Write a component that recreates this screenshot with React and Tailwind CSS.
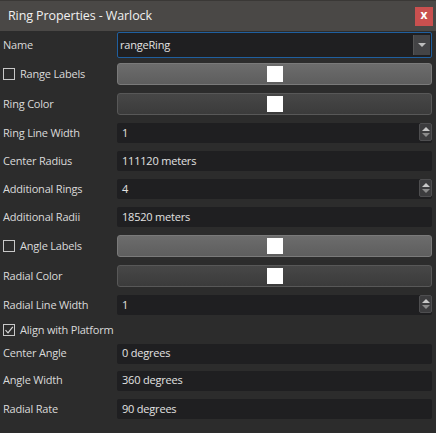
import React from "react";

const font = { fontFamily: '"Open Sans", "Noto Sans", sans-serif' };

function Label({ children }) {
  return (
    <div className="w-[117px] shrink-0 pl-[3px] text-[11px] tracking-[-0.2px] whitespace-nowrap text-[#dadada]">
      {children}
    </div>
  );
}

function CheckLabel({ checked, children }) {
  return (
    <div className="w-[117px] shrink-0 pl-[3px] flex items-center gap-[5px] text-[11px] tracking-[-0.2px] whitespace-nowrap text-[#dadada]">
      <div className="w-[12px] h-[12px] shrink-0 border border-[#c8c8c8] flex items-center justify-center">
        {checked && (
          <svg width="10" height="10" viewBox="0 0 10 10">
            <path d="M1.5 5.2 L4 7.8 L8.8 1.8" fill="none" stroke="#d8d8d8" strokeWidth="1.2" />
          </svg>
        )}
      </div>
      <span>{children}</span>
    </div>
  );
}

function TextField({ value, spin }) {
  return (
    <div className="flex-1 h-[20px] bg-[#1f1f21] rounded-[2px] flex items-center pl-[5px] text-[11px] tracking-[-0.2px] text-[#e2e2e2] relative">
      {value}
      {spin && (
        <div className="absolute right-0 top-0 w-[13px] h-[18px] bg-[#3c3c3e] border border-[#4e4e50] rounded-[2px] flex flex-col items-center justify-center gap-[2px]">
          <div className="w-0 h-0 border-l-[4px] border-r-[4px] border-b-[4px] border-l-transparent border-r-transparent border-b-[#c8c8c8]" />
          <div className="w-0 h-0 border-l-[4px] border-r-[4px] border-t-[4px] border-l-transparent border-r-transparent border-t-[#8a8a8a]" />
        </div>
      )}
    </div>
  );
}

function ColorButton({ light }) {
  return (
    <div
      className={
        "flex-1 h-[22px] rounded-[3px] border flex items-center justify-center " +
        (light
          ? "bg-gradient-to-b from-[#6c6c6c] to-[#5e5e5e] border-[#7a7a7a]"
          : "bg-gradient-to-b from-[#474747] to-[#3b3b3b] border-[#585858]")
      }
    >
      <div className="w-[16px] h-[16px] bg-white" />
    </div>
  );
}

function Row({ h, children }) {
  return (
    <div className="flex items-center pr-[4px]" style={{ height: h }}>
      {children}
    </div>
  );
}

export default function App() {
  return (
    <div className="w-[436px] h-[433px] bg-[#2c2c2c] overflow-hidden" style={font}>
      {/* title bar */}
      <div className="h-[31px] bg-[#4a4846] border-t border-[#3a3836] flex items-center justify-between pl-[8px] pr-[3px]">
        <span className="text-[12.5px] tracking-[-0.1px] text-[#f0f0f0]">Ring Properties - Warlock</span>
        <div className="w-[18px] h-[19px] bg-[#c9504f] flex items-center justify-center text-white text-[12px] font-bold leading-none pb-[2px]">
          x
        </div>
      </div>

      <Row h={28}>
        <Label>Name</Label>
        <div className="flex-1 h-[26px] bg-[#1f1f21] border border-[#1f5f9f] rounded-[2px] flex items-center pl-[2px] text-[11px] tracking-[-0.2px] text-[#e2e2e2] relative">
          rangeRing
          <div className="absolute right-[1px] top-[2px] w-[17px] h-[20px] bg-[#444446] border-l border-[#555] flex items-center justify-center">
            <div className="w-0 h-0 border-l-[4px] border-r-[4px] border-t-[4px] border-l-transparent border-r-transparent border-t-[#bdbdbd]" />
          </div>
        </div>
      </Row>
      <Row h={30}>
        <CheckLabel>Range Labels</CheckLabel>
        <ColorButton light />
      </Row>
      <Row h={30}>
        <Label>Ring Color</Label>
        <ColorButton />
      </Row>
      <Row h={28}>
        <Label>Ring Line Width</Label>
        <TextField value="1" spin />
      </Row>
      <Row h={28}>
        <Label>Center Radius</Label>
        <TextField value="111120 meters" />
      </Row>
      <Row h={28}>
        <Label>Additional Rings</Label>
        <TextField value="4" spin />
      </Row>
      <Row h={28}>
        <Label>Additional Radii</Label>
        <TextField value="18520 meters" />
      </Row>
      <Row h={30}>
        <CheckLabel>Angle Labels</CheckLabel>
        <ColorButton light />
      </Row>
      <Row h={30}>
        <Label>Radial Color</Label>
        <ColorButton />
      </Row>
      <Row h={28}>
        <Label>Radial Line Width</Label>
        <TextField value="1" spin />
      </Row>
      <Row h={22}>
        <CheckLabel checked>Align with Platform</CheckLabel>
      </Row>
      <Row h={25}>
        <Label>Center Angle</Label>
        <TextField value="0 degrees" />
      </Row>
      <Row h={29}>
        <Label>Angle Width</Label>
        <TextField value="360 degrees" />
      </Row>
      <Row h={28}>
        <Label>Radial Rate</Label>
        <TextField value="90 degrees" />
      </Row>
    </div>
  );
}
